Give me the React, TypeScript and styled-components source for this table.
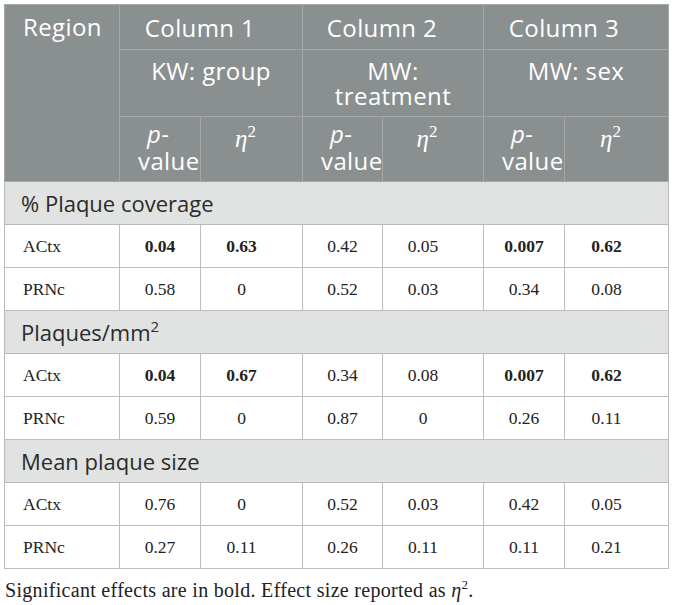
import styled, { createGlobalStyle } from 'styled-components';

const GlobalStyle = createGlobalStyle`
  body {
    margin: 0;
    background: #fff;
  }
`;

const Page = styled.div`
  padding: 4px 5px 0 4px;
`;

const Table = styled.table`
  width: 664px;
  border-collapse: collapse;
  table-layout: fixed;
  border: 1px solid #a9acad;
`;

const HeadRow = styled.tr<{ $h: number }>`
  height: ${(p) => p.$h}px;
  background: #8a8f90;
`;

const HeadCell = styled.th<{ $align?: string; $pr?: number; $pt?: number; $pb?: number; $valign?: string }>`
  padding: ${(p) => p.$pt ?? 8}px ${(p) => p.$pr ?? 10}px ${(p) => p.$pb ?? 8}px
    ${(p) => (p.$align === 'left' ? 18 : 10)}px;
  border: 1px solid #a4a8a9;
  color: #fff;
  font-family: 'Open Sans', 'Liberation Sans', sans-serif;
  font-weight: 400;
  font-size: 24px;
  letter-spacing: 0.4px;
  line-height: 25px;
  text-align: ${(p) => p.$align ?? 'center'};
  vertical-align: ${(p) => p.$valign ?? 'top'};
  white-space: normal;
`;

// "p-" over "value", each line placed from the cell's left edge
const PLine = styled.div<{ $indent: number; $lh: number }>`
  margin-left: ${(p) => p.$indent}px;
  line-height: ${(p) => p.$lh}px;
  text-align: left;
  white-space: nowrap;
`;

const Em = styled.i`
  font-style: italic;
`;

const Eta = styled.span`
  font-family: 'Liberation Serif', 'DejaVu Serif', serif;
  font-style: italic;
  font-size: 25px;
  letter-spacing: 0;

  sup {
    font-style: normal;
    font-size: 17px;
    line-height: 0;
    vertical-align: 10px;
  }
`;

const SectionRow = styled.tr`
  height: 43px;
  background: #e1e2e2;
`;

const SectionCell = styled.td`
  padding: 0 16px;
  border: 1px solid #b8baba;
  color: #2b2b2b;
  font-family: 'Open Sans', 'Liberation Sans', sans-serif;
  font-size: 22px;
  line-height: 25px;

  sup {
    font-size: 15px;
    line-height: 0;
    vertical-align: 9px;
  }
`;

const DataRow = styled.tr`
  height: 43px;
  background: #fff;
`;

const Cell = styled.td<{ $first?: boolean; $wide?: boolean; $bold?: boolean }>`
  padding: 0 ${(p) => (p.$wide ? 20 : 0)}px 0 ${(p) => (p.$first ? 18 : 0)}px;
  border: 1px solid #bdbdbd;
  color: #222;
  font-family: 'Liberation Serif', 'Times New Roman', serif;
  font-size: 17.5px;
  font-weight: ${(p) => (p.$bold ? 700 : 400)};
  text-align: ${(p) => (p.$first ? 'left' : 'center')};
  vertical-align: middle;
`;

const Footnote = styled.p`
  margin: 10px 0 0 1px;
  color: #222;
  font-family: 'Liberation Serif', 'Times New Roman', serif;
  font-size: 20px;
  letter-spacing: 0.3px;

  i {
    font-style: italic;
  }
  sup {
    font-size: 13px;
    line-height: 0;
    vertical-align: 8px;
  }
`;

type Value = { v: string; b?: boolean };
type Row = { region: string; values: Value[] };
type Section = { title: React.ReactNode; rows: Row[] };

const sections: Section[] = [
  {
    title: '% Plaque coverage',
    rows: [
      {
        region: 'ACtx',
        values: [
          { v: '0.04', b: true },
          { v: '0.63', b: true },
          { v: '0.42' },
          { v: '0.05' },
          { v: '0.007', b: true },
          { v: '0.62', b: true },
        ],
      },
      {
        region: 'PRNc',
        values: [{ v: '0.58' }, { v: '0' }, { v: '0.52' }, { v: '0.03' }, { v: '0.34' }, { v: '0.08' }],
      },
    ],
  },
  {
    title: (
      <>
        Plaques/mm<sup>2</sup>
      </>
    ),
    rows: [
      {
        region: 'ACtx',
        values: [
          { v: '0.04', b: true },
          { v: '0.67', b: true },
          { v: '0.34' },
          { v: '0.08' },
          { v: '0.007', b: true },
          { v: '0.62', b: true },
        ],
      },
      {
        region: 'PRNc',
        values: [{ v: '0.59' }, { v: '0' }, { v: '0.87' }, { v: '0' }, { v: '0.26' }, { v: '0.11' }],
      },
    ],
  },
  {
    title: 'Mean plaque size',
    rows: [
      {
        region: 'ACtx',
        values: [{ v: '0.76' }, { v: '0' }, { v: '0.52' }, { v: '0.03' }, { v: '0.42' }, { v: '0.05' }],
      },
      {
        region: 'PRNc',
        values: [{ v: '0.27' }, { v: '0.11' }, { v: '0.26' }, { v: '0.11' }, { v: '0.11' }, { v: '0.21' }],
      },
    ],
  },
];

const widths = [115, 81, 102, 80, 101, 81, 104];

export default function App() {
  return (
    <Page>
      <GlobalStyle />
      <Table>
        <colgroup>
          {widths.map((w, i) => (
            <col key={i} style={{ width: w }} />
          ))}
        </colgroup>
        <thead>
          <HeadRow $h={45}>
            <HeadCell rowSpan={3} $align="left" $pt={9}>
              Region
            </HeadCell>
            <HeadCell colSpan={2} $pr={32} $valign="middle">
              Column 1
            </HeadCell>
            <HeadCell colSpan={2} $pr={32} $valign="middle">
              Column 2
            </HeadCell>
            <HeadCell colSpan={2} $pr={34} $valign="middle">
              Column 3
            </HeadCell>
          </HeadRow>
          <HeadRow $h={67}>
            <HeadCell colSpan={2}>KW: group</HeadCell>
            <HeadCell colSpan={2}>MW: treatment</HeadCell>
            <HeadCell colSpan={2}>MW: sex</HeadCell>
          </HeadRow>
          <HeadRow $h={65}>
            {[0, 1, 2].map((i) => (
              <>
                <HeadCell key={`p${i}`} $pr={0} $align="left" $pt={4} $pb={0}>
                  <PLine $indent={9} $lh={25}>
                    <Em>p</Em>-
                  </PLine>
                  <PLine $indent={0} $lh={29}>
                    value
                  </PLine>
                </HeadCell>
                <HeadCell key={`e${i}`} $pr={22}>
                  <Eta>
                    η<sup>2</sup>
                  </Eta>
                </HeadCell>
              </>
            ))}
          </HeadRow>
        </thead>
        <tbody>
          {sections.map((s, si) => (
            <>
              <SectionRow key={`s${si}`}>
                <SectionCell colSpan={7}>{s.title}</SectionCell>
              </SectionRow>
              {s.rows.map((r, ri) => (
                <DataRow key={`r${si}-${ri}`}>
                  <Cell $first>{r.region}</Cell>
                  {r.values.map((v, vi) => (
                    <Cell key={vi} $wide={vi % 2 === 1} $bold={v.b}>
                      {v.v}
                    </Cell>
                  ))}
                </DataRow>
              ))}
            </>
          ))}
        </tbody>
      </Table>
      <Footnote>
        Significant effects are in bold. Effect size reported as <i>η</i>
        <sup>2</sup>.
      </Footnote>
    </Page>
  );
}
